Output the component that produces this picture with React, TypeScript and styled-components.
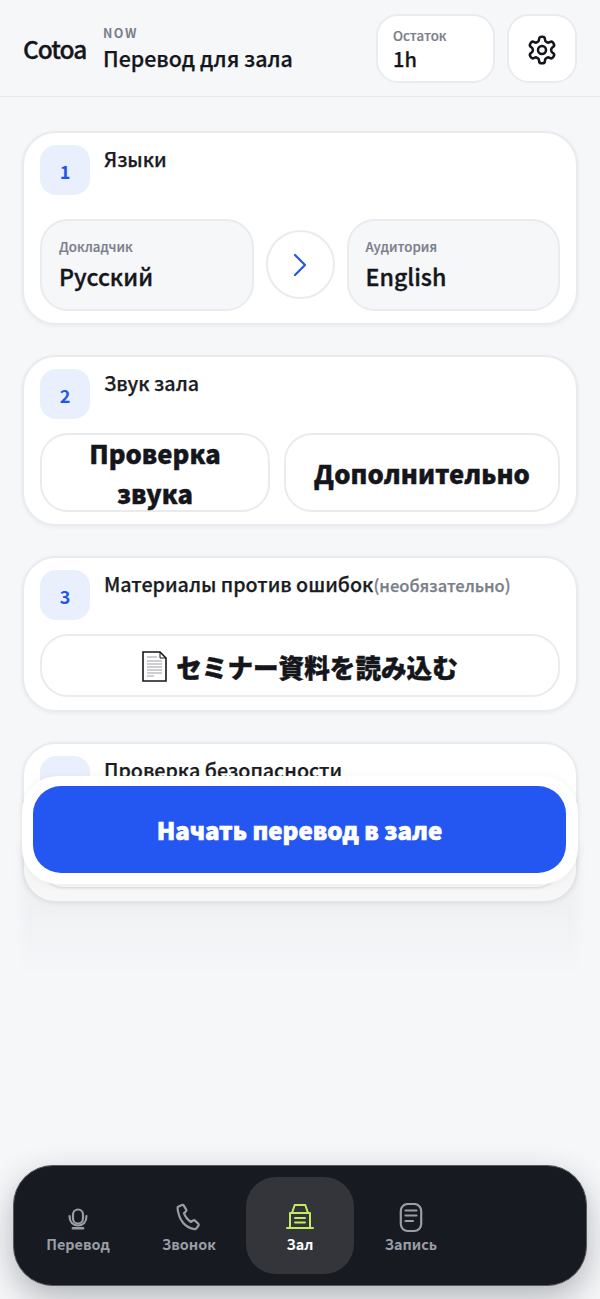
import React from "react";
import styled, { createGlobalStyle } from "styled-components";

const Global = createGlobalStyle`
  html, body { margin: 0; padding: 0; background: #f6f7f9; }
  * { box-sizing: border-box; }
  body { font-family: "Noto Sans CJK JP", "Noto Sans", sans-serif; color: #14161b; }
`;

const Screen = styled.div`
  position: relative;
  width: 600px;
  height: 1299px;
  overflow: hidden;
  background: #f6f7f9;
`;

const Header = styled.header`
  display: flex;
  align-items: center;
  height: 97px;
  padding: 0 23px;
  border-bottom: 1px solid #e6e8eb;
`;

const Logo = styled.div`
  font-size: 24.5px;
  font-weight: 500;
  letter-spacing: -1px;
  width: 80px;
  line-height: 1;
  margin-top: 3px;
  -webkit-text-stroke: 0.3px currentColor;
`;

const TitleBlock = styled.div`
  flex: 1;
  display: flex;
  flex-direction: column;
  gap: 1px;
  margin-top: 2px;
`;

const Eyebrow = styled.div`
  font-size: 12.5px;
  font-weight: 700;
  letter-spacing: 1.5px;
  line-height: 16px;
  color: #7a7e8a;
`;

const Title = styled.div`
  font-size: 21.4px;
  font-weight: 500;
  line-height: 32px;
  -webkit-text-stroke: 0.25px currentColor;
`;

const RemainPill = styled.div`
  width: 119px;
  height: 69px;
  padding: 10px 15px 0;
  background: #fff;
  border: 2px solid #e9ebee;
  border-radius: 22px;
`;

const RemainLabel = styled.div`
  font-size: 13.3px;
  font-weight: 500;
  line-height: 20px;
  color: #7a7e8a;
  -webkit-text-stroke: 0.2px currentColor;
`;

const RemainValue = styled.div`
  font-size: 20px;
  font-weight: 500;
  line-height: 26px;
  -webkit-text-stroke: 0.25px currentColor;
`;

const GearButton = styled.div`
  width: 70px;
  height: 69px;
  margin-left: 12px;
  padding-top: 3px;
  background: #fff;
  border: 2px solid #e9ebee;
  border-radius: 22px;
  display: flex;
  align-items: center;
  justify-content: center;
`;

const Main = styled.main`
  display: flex;
  flex-direction: column;
  gap: 30px;
  padding: 33.7px 22px 0 22px;
`;

const Card = styled.section<{ $h: number }>`
  height: ${(p) => p.$h}px;
  padding: 12px 16px;
  background: #fff;
  border: 2px solid #e9ebee;
  border-radius: 34px;
  box-shadow: 0 1px 4px rgba(20, 22, 30, 0.06);
  overflow: hidden;
`;

const CardHead = styled.div`
  display: flex;
  gap: 14px;
  height: 50px;
`;

const Badge = styled.div`
  flex: none;
  width: 50px;
  height: 50px;
  border-radius: 16px;
  background: #e9effd;
  color: #2456e6;
  font-size: 18px;
  font-weight: 700;
  display: flex;
  align-items: center;
  justify-content: center;
  padding-top: 2px;
`;

const CardTitle = styled.h2`
  margin: 0;
  font-size: 19.7px;
  font-weight: 500;
  line-height: 28px;
  color: #1a1c22;
  -webkit-text-stroke: 0.25px currentColor;
`;

const Optional = styled.span`
  font-size: 16.5px;
  color: #7a7e8a;
`;

const LangRow = styled.div`
  display: flex;
  align-items: center;
  gap: 12px;
  margin-top: 24px;
`;

const LangBox = styled.div`
  flex: 1;
  height: 92px;
  padding: 16px 17px 0;
  background: #f6f7f9;
  border: 2px solid #e9ebee;
  border-radius: 28px;
`;

const LangLabel = styled.div`
  font-size: 13.3px;
  font-weight: 500;
  line-height: 20px;
  color: #7a7e8a;
  -webkit-text-stroke: 0.2px currentColor;
`;

const LangValue = styled.div`
  margin-top: 1px;
  font-size: 23.2px;
  font-weight: 500;
  line-height: 36px;
  -webkit-text-stroke: 0.35px currentColor;
`;

const SwapCircle = styled.div`
  flex: none;
  width: 69px;
  height: 69px;
  background: #fff;
  border: 2px solid #e9ebee;
  border-radius: 50%;
  display: flex;
  align-items: center;
  justify-content: center;
`;

const ButtonRow = styled.div`
  display: flex;
  gap: 14px;
  margin-top: 14px;
`;

const GhostButton = styled.div<{ $w?: number; $h: number }>`
  ${(p) => (p.$w ? `width: ${p.$w}px;` : "flex: 1;")}
  height: ${(p) => p.$h}px;
  padding: 2px 14px 0;
  background: #fff;
  border: 2px solid #e9ebee;
  border-radius: 28px;
  display: flex;
  align-items: center;
  justify-content: center;
  text-align: center;
  font-size: 25.6px;
  font-weight: 900;
  line-height: 40px;
  color: #14161b;
  -webkit-text-stroke: 0.4px currentColor;
`;

const WideButton = styled(GhostButton)`
  margin-top: 14px;
  gap: 9px;
`;

const InnerBlock = styled.div`
  margin-top: 10px;
  height: 71px;
  border-radius: 24px;
  box-shadow: 0 1px 3px rgba(20, 22, 30, 0.14);
`;

const CtaWrap = styled.div`
  position: absolute;
  left: 22px;
  top: 776px;
  width: 556px;
  height: 108px;
  padding: 10px 12px 11px 11px;
  background: #fff;
  border-radius: 36px;
  box-shadow: 0 0 8px rgba(20, 25, 35, 0.05);

  &::before {
    content: "";
    position: absolute;
    left: 0;
    right: 0;
    top: 70px;
    height: 130px;
    background: linear-gradient(rgba(20, 25, 35, 0.06), rgba(20, 25, 35, 0.04) 30%, rgba(20, 25, 35, 0));
    filter: blur(5px);
    z-index: -1;
  }
`;

const CtaLayer = styled.div`
  position: absolute;
  inset: 0;
  z-index: 1;
  pointer-events: none;
`;

const Cta = styled.div`
  height: 87px;
  border-radius: 28px;
  background: #2456f2;
  color: #fff;
  font-size: 24px;
  font-weight: 900;
  display: flex;
  align-items: center;
  justify-content: center;
  -webkit-text-stroke: 0.7px currentColor;
`;

const Nav = styled.nav`
  position: absolute;
  left: 13px;
  top: 1165px;
  width: 574px;
  height: 121px;
  padding: 11px 10px;
  display: grid;
  grid-template-columns: repeat(5, 1fr);
  gap: 3px;
  background: #181a21;
  border: 1px solid #55585f;
  border-radius: 40px;
  box-shadow: 0 12px 32px rgba(20, 25, 35, 0.3);
`;

const NavItem = styled.div<{ $active?: boolean }>`
  display: flex;
  flex-direction: column;
  align-items: center;
  gap: 1px;
  height: 97px;
  padding-top: 26px;
  border-radius: 30px;
  background: ${(p) => (p.$active ? "#33353b" : "transparent")};
  color: ${(p) => (p.$active ? "#fff" : "#9a9da6")};
  font-size: 14.4px;
  font-weight: 700;
  line-height: 20px;
`;

const NavSvg = styled.svg.attrs({
  width: 28,
  height: 30,
  fill: "none",
  strokeLinecap: "round",
  strokeLinejoin: "round",
})`
  flex: none;
`;

const Gear = () => (
  <svg width="32" height="32" viewBox="0 0 24 24" fill="none" stroke="#14161b" strokeWidth="1.9" strokeLinecap="round" strokeLinejoin="round">
    <path d="M12.22 2h-.44a2 2 0 0 0-2 2v.18a2 2 0 0 1-1 1.730l-.43.25a2 2 0 0 1-2 0l-.15-.08a2 2 0 0 0-2.730.73l-.22.38a2 2 0 0 0 .73 2.730l.15.1a2 2 0 0 1 1 1.720v.51a2 2 0 0 1-1 1.740l-.15.09a2 2 0 0 0-.73 2.730l.22.38a2 2 0 0 0 2.730.73l.15-.08a2 2 0 0 1 2 0l.43.25a2 2 0 0 1 1 1.730V20a2 2 0 0 0 2 2h.44a2 2 0 0 0 2-2v-.18a2 2 0 0 1 1-1.730l.43-.25a2 2 0 0 1 2 0l.15.08a2 2 0 0 0 2.730-.73l.22-.39a2 2 0 0 0-.73-2.730l-.15-.08a2 2 0 0 1-1-1.740v-.5a2 2 0 0 1 1-1.740l.15-.09a2 2 0 0 0 .73-2.730l-.22-.38a2 2 0 0 0-2.730-.73l-.15.08a2 2 0 0 1-2 0l-.43-.25a2 2 0 0 1-1-1.730V4a2 2 0 0 0-2-2z" />
    <circle cx="12" cy="12" r="3" />
  </svg>
);

const Chevron = () => (
  <svg width="16" height="24" viewBox="0 0 16 24" fill="none" stroke="#2456e6" strokeWidth="2.2" strokeLinecap="round" strokeLinejoin="round">
    <path d="M3 2l10 10L3 22" />
  </svg>
);

const DocIcon = () => (
  <svg width="25" height="31" viewBox="0 0 25 31">
    <path d="M1 1h17l6 6v23H1z" fill="#fff" stroke="#14161b" strokeWidth="1.6" strokeLinejoin="miter" />
    <path d="M18 1v6h6" fill="none" stroke="#14161b" strokeWidth="1" />
    <path d="M5 6h10M5 10h15M5 13h15M5 16h15M5 19h15M5 22h15M5 25h7" stroke="#9b9ea3" strokeWidth="1.2" />
  </svg>
);

const MicIcon = () => (
  <NavSvg viewBox="4 3 28 30" stroke="#9a9da6" strokeWidth="2.200">
    <rect x="13" y="9.500" width="10" height="14" rx="5" />
    <path d="M9.500 16C9.500 22 13 25.500 18 25.500S26.500 22 26.500 16" />
    <path d="M13 28.200h10" strokeWidth="2.600" />
  </NavSvg>
);

const PhoneIcon = () => (
  <NavSvg viewBox="5 3 28 30" stroke="#9a9da6" strokeWidth="2.200">
    <path d="M8.500 6.500L12 5a1.500 1.500 0 0 1 1.800.6l2.400 4a1.500 1.500 0 0 1-.3 1.900l-1.900 1.600c1.200 3.600 3.600 6.600 6.900 8.900l2.200-1.500a1.500 1.500 0 0 1 1.900.1l3.300 3.200a1.500 1.500 0 0 1 .1 2l-2.300 2.800a1.500 1.500 0 0 1-1.600.5C15.500 28 8.700 20.200 7.500 8a1.500 1.500 0 0 1 1-1.500z" />
  </NavSvg>
);

const HallIcon = () => (
  <NavSvg viewBox="6 3 28 30" stroke="#c3ec5e" strokeWidth="2">
    <path d="M12 13l2.700-8h10.600L28 13" />
    <path d="M10 13h20v15H10z" />
    <path d="M7 28h26" />
    <path d="M15 18h10M15 22.500h10" />
  </NavSvg>
);

const NoteIcon = () => (
  <NavSvg viewBox="6 3 28 30" stroke="#9a9da6" strokeWidth="2.200">
    <rect x="9.800" y="4" width="20.400" height="27" rx="7" />
    <path d="M14.500 10.500h11M14.500 15.500h11M14.500 21h7.500" />
  </NavSvg>
);

export default function App() {
  return (
    <Screen>
      <Global />
      <Header>
        <Logo>Cotoa</Logo>
        <TitleBlock>
          <Eyebrow>NOW</Eyebrow>
          <Title>Перевод для зала</Title>
        </TitleBlock>
        <RemainPill>
          <RemainLabel>Остаток</RemainLabel>
          <RemainValue>1h</RemainValue>
        </RemainPill>
        <GearButton>
          <Gear />
        </GearButton>
      </Header>
      <Main>
        <Card $h={194.3}>
          <CardHead>
            <Badge>1</Badge>
            <CardTitle>Языки</CardTitle>
          </CardHead>
          <LangRow>
            <LangBox>
              <LangLabel>Докладчик</LangLabel>
              <LangValue>Русский</LangValue>
            </LangBox>
            <SwapCircle>
              <Chevron />
            </SwapCircle>
            <LangBox>
              <LangLabel>Аудитория</LangLabel>
              <LangValue>English</LangValue>
            </LangBox>
          </LangRow>
        </Card>
        <Card $h={171.4}>
          <CardHead>
            <Badge>2</Badge>
            <CardTitle>Звук зала</CardTitle>
          </CardHead>
          <ButtonRow>
            <GhostButton $w={230} $h={79}>Проверка звука</GhostButton>
            <GhostButton $h={79}>Дополнительно</GhostButton>
          </ButtonRow>
        </Card>
        <Card $h={155.6}>
          <CardHead>
            <Badge>3</Badge>
            <CardTitle>
              Материалы против ошибок<Optional>(необязательно)</Optional>
            </CardTitle>
          </CardHead>
          <WideButton $h={63}>
            <DocIcon />
            セミナー資料を読み込む
          </WideButton>
        </Card>
        <Card $h={161}>
          <CardHead>
            <Badge>4</Badge>
            <CardTitle>Проверка безопасности</CardTitle>
          </CardHead>
          <InnerBlock />
        </Card>
      </Main>
      <CtaLayer>
        <CtaWrap>
          <Cta>Начать перевод в зале</Cta>
        </CtaWrap>
      </CtaLayer>
      <Nav>
        <NavItem>
          <MicIcon />
          Перевод
        </NavItem>
        <NavItem>
          <PhoneIcon />
          Звонок
        </NavItem>
        <NavItem $active>
          <HallIcon />
          Зал
        </NavItem>
        <NavItem>
          <NoteIcon />
          Запись
        </NavItem>
      </Nav>
    </Screen>
  );
}
